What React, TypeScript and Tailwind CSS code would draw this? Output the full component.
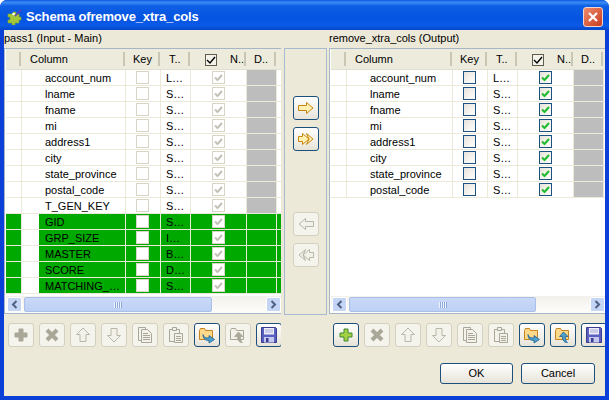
import type { ReactNode } from 'react';

type IconName = 'plus' | 'cross' | 'up' | 'down' | 'copy' | 'paste' | 'import' | 'export' | 'save' | 'right' | 'rightAll' | 'left' | 'leftAll';

const leftRows = ['account_num', 'lname', 'fname', 'mi', 'address1', 'city', 'state_province', 'postal_code', 'T_GEN_KEY'];
const leftTypes = ['L…', 'S…', 'S…', 'S…', 'S…', 'S…', 'S…', 'S…', 'S…'];
const greenRows = [
  ['GID', 'S…'],
  ['GRP_SIZE', 'I…'],
  ['MASTER', 'B…'],
  ['SCORE', 'D…'],
  ['MATCHING_…', 'S…'],
];

function ToolIcon({ name, off }: { name: IconName; off?: boolean }) {
  const line = off ? '#b9b7a8' : '#c8880f';
  const fill = off ? '#f3f2ea' : '#fff0b4';
  return (
    <svg width="18" height="18" viewBox="0 0 18 18" className="shrink-0">
      {name === 'plus' && (
        <path d="M7 3h4v4h4v4h-4v4H7v-4H3V7h4z" fill={off ? '#a9a798' : '#a6d044'} stroke={off ? '#a9a798' : '#3c8a2e'} />
      )}
      {name === 'cross' && <path d="M4 4l10 10M14 4L4 14" stroke="#a9a798" strokeWidth="4" />}
      {name === 'up' && <path d="M9 2l6.500 6.500H12v7H6v-7H2.500z" fill={fill} stroke={line} />}
      {name === 'down' && <path d="M9 16l6.500-6.500H12v-7H6v7H2.500z" fill={fill} stroke={line} />}
      {name === 'copy' && (
        <g fill="none" stroke="#a9a798">
          <path d="M9.500 3.500v-2h-7v13h3" />
          <path d="M5.500 3.500h6l4 4v9h-10z" fill="#f3f2ea" />
          <path d="M7 7.500h5M7 9.500h7M7 11.500h7M7 13.500h7" />
        </g>
      )}
      {name === 'paste' && (
        <g fill="#f3f2ea" stroke="#a9a798">
          <path d="M2.500 3.500h10v12h-10z" />
          <path d="M5.500 1.500h4v3h-4z" />
          <path d="M7.500 7.500h8v9h-8z" />
          <path d="M9 10.500h5M9 12.500h5M9 14.500h5" />
        </g>
      )}
      {name === 'import' && (
        <g>
          <path d="M1.500 4.500l1-2h4l1 2h7v9h-13z" fill={off ? '#f3f2ea' : '#ffd98a'} stroke={off ? '#a9a798' : '#c8821e'} />
          <path d="M5 8.500c.500 3 3 3.500 6 3.500V9.500l5.500 4L11 17v-2.500c-4 0-6-2-6-6z" fill={off ? '#a9a798' : '#4e9fc9'} stroke={off ? '#a9a798' : '#1c5f95'} strokeWidth=".8" />
        </g>
      )}
      {name === 'export' && (
        <g>
          <path d="M1.500 4.500l1-2h4l1 2h7v9h-13z" fill={off ? '#f3f2ea' : '#ffd98a'} stroke={off ? '#a9a798' : '#c8821e'} />
          <path d="M9.500 6l4.500 4.500h-2.500c0 3 0 4.500 2 6-3.500 0-5-2-5-6H5.500z" fill={off ? '#a9a798' : '#4e9fc9'} stroke={off ? '#a9a798' : '#1c5f95'} strokeWidth=".8" />
        </g>
      )}
      {name === 'save' && (
        <g>
          <path d="M1.500 1.500h14l1 1v14h-15z" fill="#5a5fc0" stroke="#3a3c90" />
          <path d="M4 2h10v6.500H4z" fill="#eeeef8" />
          <path d="M5 4h8M5 6h8" stroke="#a8aad8" />
          <path d="M4 11h10v5.500H4z" fill="#c4c8ee" />
          <path d="M6 12h2.500v4H6z" fill="#3a3c90" />
        </g>
      )}
      {name === 'right' && <path d="M1.500 6.500h8v-3L16 9l-6.500 5.500v-3h-8z" fill={fill} stroke={line} />}
      {name === 'left' && <path d="M16.500 6.500h-8v-3L2 9l6.500 5.500v-3h8z" fill={fill} stroke={line} />}
      {name === 'rightAll' && (
        <g fill={fill} stroke={line}>
          <path d="M9.500 3.500L16 9l-6.500 5.500L12 9z" />
          <path d="M1.500 6.500h4v-3L12 9l-6.500 5.500v-3h-4z" />
        </g>
      )}
      {name === 'leftAll' && (
        <g fill={fill} stroke={line}>
          <path d="M8.500 3.500L2 9l6.500 5.500L6 9z" />
          <path d="M16.500 6.500h-4v-3L6 9l6.500 5.500v-3h4z" />
        </g>
      )}
    </svg>
  );
}

function ToolButton({ name, off }: { name: IconName; off?: boolean }) {
  return (
    <button
      className={
        off
          ? 'flex h-[24px] w-[26px] shrink-0 items-center justify-center rounded-[3px] border border-[#d3d0c0] bg-[#f4f3ec]'
          : 'flex h-[24px] w-[26px] shrink-0 items-center justify-center rounded-[3px] border border-[#1c4f7c] bg-gradient-to-b from-white to-[#e6e3d8]'
      }
    >
      <ToolIcon name={name} off={off} />
    </button>
  );
}

function Check({ on, off, mark }: { on?: boolean; off?: boolean; mark?: boolean }) {
  return (
    <div
      className={
        off
          ? 'flex h-[13px] w-[13px] items-center justify-center border border-[#d8d5c6] bg-white'
          : 'flex h-[13px] w-[13px] items-center justify-center border border-[#1c5180] bg-gradient-to-br from-[#e6e3da] to-white'
      }
    >
      {mark && (
        <svg width="9" height="9" viewBox="0 0 9 9">
          <path d="M1 4.500l2.500 2.500L8 2" fill="none" stroke={on ? '#1fbb2c' : '#c4c2b6'} strokeWidth="2" />
        </svg>
      )}
    </div>
  );
}

function HeaderRow({ colWidth }: { colWidth: string }) {
  const sep = 'flex h-full shrink-0 items-center border-r-2 border-r-[#c9c6b4] pt-[1px]';
  return (
    <div className="flex h-[21px] shrink-0 items-center border-b border-b-[#e2dfcf] bg-[#ecebdc] py-[3px]">
      <div className={`${sep} w-[15px]`} />
      <div className={`${sep} ${colWidth} pl-[9px]`}>Column</div>
      <div className={`${sep} w-[35px] pl-[8px]`}>Key</div>
      <div className={`${sep} w-[30px] pl-[9px]`}>T..</div>
      <div className={`${sep} w-[56px] pl-[15px]`}>
        <div className="flex h-[12px] w-[12px] items-center justify-center border border-[#5f5d4f] bg-[#f4f3ea]">
          <svg width="10" height="10" viewBox="0 0 10 10">
            <path d="M1 5l3 3 5-6" fill="none" stroke="#000" strokeWidth="1.400" />
          </svg>
        </div>
        <span className="ml-[13px]">N..</span>
      </div>
      <div className={`${sep} w-[30px] pl-[8px]`}>D..</div>
    </div>
  );
}

function Row({ name, type, green, colWidth, live }: { name: string; type: string; green?: boolean; colWidth: string; live?: boolean }) {
  const bg = green ? 'bg-[#00a900]' : 'bg-white';
  const line = 'flex h-full shrink-0 items-center border-r border-r-[#ece9d8]';
  return (
    <div className="flex h-[16px] shrink-0 border-b border-b-[#ece9d8] bg-white">
      <div className={`${line} ${bg} w-[16px]`} />
      <div className={`${line} ${colWidth}`}>
        <div className="h-full w-[17px] shrink-0 bg-white" />
        <div className={`flex h-full flex-1 items-center pl-[6px] pt-[1px] ${bg}`}>{name}</div>
      </div>
      <div className={`${line} ${bg} w-[35px] pl-[10px]`}>
        <Check off={!live} />
      </div>
      <div className={`${line} ${bg} w-[30px] pl-[5px] pt-[1px]`}>{type}</div>
      <div className={`${line} ${bg} w-[56px] pl-[21px]`}>
        <Check off={!live} on={live} mark />
      </div>
      <div className={`${line} w-[30px] ${green ? bg : 'bg-[#bdbdbd]'}`} />
      <div className={`h-full flex-1 ${bg}`} />
    </div>
  );
}

function ScrollArrow({ dir }: { dir: 'left' | 'right' }) {
  return (
    <div className="flex h-[15px] w-[15px] shrink-0 items-center justify-center rounded-[2px] border border-white bg-[#c5d5f5]">
      <svg width="9" height="9" viewBox="0 0 9 9">
        <path d={dir === 'left' ? 'M6.500 1L3 4.500 6.500 8' : 'M2.500 1L6 4.500 2.500 8'} fill="none" stroke="#4d6185" strokeWidth="2" />
      </svg>
    </div>
  );
}

function ScrollBar({ thumb }: { thumb: string }) {
  return (
    <div className="mt-auto flex h-[17px] shrink-0 items-center bg-gradient-to-b from-[#f3f1ec] to-[#fdfdfa] pl-[1px]">
      <ScrollArrow dir="left" />
      <div className={`ml-[2px] flex h-[15px] ${thumb} items-center justify-center rounded-[2px] border border-[#a9bfe6] bg-gradient-to-b from-[#c9d9f8] to-[#bdd0f5]`}>
        <div className="h-[6px] w-[8px] bg-[repeating-linear-gradient(90deg,#eef3fd_0,#eef3fd_1px,#8da7d8_1px,#8da7d8_2px)]" />
      </div>
      <div className="flex-1" />
      <ScrollArrow dir="right" />
    </div>
  );
}

function TablePanel({ children }: { children: ReactNode }) {
  return (
    <div className="flex h-[266px] flex-col overflow-hidden border-t border-b border-l border-[#a7b6c6] bg-white pl-[1px]">
      {children}
    </div>
  );
}

const leftTools: [IconName, boolean][] = [
  ['plus', true], ['cross', true], ['up', true], ['down', true], ['copy', true], ['paste', true], ['import', false], ['export', true], ['save', false],
];
const rightTools: [IconName, boolean][] = [
  ['plus', false], ['cross', true], ['up', true], ['down', true], ['copy', true], ['paste', true], ['import', false], ['export', false], ['save', false],
];

export default function App() {
  return (
    <div className="h-[400px] w-[609px] overflow-hidden bg-white font-['Liberation_Sans',sans-serif] text-[11px] text-black">
      <div className="flex h-full flex-col rounded-t-[7px] bg-[#0a3fd8]">
        {/* title bar */}
        <div className="flex h-[30px] shrink-0 items-center rounded-t-[7px] bg-[linear-gradient(180deg,#0a5ae0_0,#3b8cf5_8%,#0f5fe6_20%,#0553e0_60%,#0a5be8_85%,#0446c8_100%)] pl-[7px] pr-[6px] pt-[3px]">
          <svg width="16" height="16" viewBox="0 0 16 16" className="shrink-0">
            <path d="M4 5h2V3h3v2h3v3h2v3h-2v3H8v2H5v-2H1v-3h2V8H1V5z" fill="#a4c639" stroke="#7ea42a" strokeWidth=".6" />
            <circle cx="6.500" cy="5" r="1.300" fill="#fff" />
            <path d="M8 7l6-6" stroke="#5a3fb8" strokeWidth="1.600" />
          </svg>
          <span className="ml-[3px] text-[13px] font-bold tracking-[-0.15px] text-white">Schema ofremove_xtra_cols</span>
          <button className="ml-auto flex h-[20px] w-[20px] items-center justify-center rounded-[3px] border border-[#f3d5cc] bg-gradient-to-br from-[#ef8a6c] to-[#c9391a]">
            <svg width="12" height="12" viewBox="0 0 12 12">
              <path d="M2 2l8 8M10 2l-8 8" stroke="#fff" strokeWidth="2.200" />
            </svg>
          </button>
        </div>

        {/* dialog body */}
        <div className="mx-[4px] mb-[4px] flex flex-1 flex-col bg-[#ece9d8]">
          <div className="flex">
            {/* input side */}
            <div className="w-[277px] shrink-0 overflow-hidden">
              <div className="flex h-[18px] items-center whitespace-nowrap pb-[2px]">pass1 (Input - Main)</div>
              <TablePanel>
                <HeaderRow colWidth="w-[104px]" />
                <div className="flex flex-col">
                  {leftRows.map((n, i) => (
                    <Row key={n} name={n} type={leftTypes[i]} colWidth="w-[104px]" />
                  ))}
                  {greenRows.map(([n, t]) => (
                    <Row key={n} name={n} type={t} green colWidth="w-[104px]" />
                  ))}
                </div>
                <ScrollBar thumb="w-[188px]" />
              </TablePanel>
              <div className="mt-[9px] flex gap-[5px] pl-[4px]">
                {leftTools.map(([n, off]) => (
                  <ToolButton key={n} name={n} off={off} />
                ))}
              </div>
            </div>

            {/* transfer buttons */}
            <div className="ml-[3px] mt-[18px] flex h-[267px] w-[43px] shrink-0 flex-col items-center border border-[#a7bad0] pt-[47px]">
              <ToolButton name="right" />
              <div className="mt-[7px]">
                <ToolButton name="rightAll" />
              </div>
              <div className="mt-[61px]">
                <ToolButton name="left" off />
              </div>
              <div className="mt-[7px]">
                <ToolButton name="leftAll" off />
              </div>
            </div>

            {/* output side */}
            <div className="ml-[2px] w-[276px] shrink-0 overflow-hidden">
              <div className="flex h-[18px] items-center whitespace-nowrap pb-[2px]">remove_xtra_cols (Output)</div>
              <TablePanel>
                <HeaderRow colWidth="w-[106px]" />
                <div className="flex flex-col">
                  {leftRows.slice(0, 8).map((n, i) => (
                    <Row key={n} name={n} type={leftTypes[i]} colWidth="w-[106px]" live />
                  ))}
                </div>
                <ScrollBar thumb="w-[187px]" />
              </TablePanel>
              <div className="mt-[9px] flex gap-[5px] pl-[4px]">
                {rightTools.map(([n, off]) => (
                  <ToolButton key={n} name={n} off={off} />
                ))}
              </div>
            </div>
          </div>

          <div className="mt-[16px] flex justify-end gap-[8px] pr-[10px]">
            <button className="h-[21px] w-[73px] rounded-[3px] border border-[#1c4f7c] bg-gradient-to-b from-white to-[#e6e3d8]">OK</button>
            <button className="h-[21px] w-[74px] rounded-[3px] border border-[#1c4f7c] bg-gradient-to-b from-white to-[#e6e3d8]">Cancel</button>
          </div>
        </div>
      </div>
    </div>
  );
}
